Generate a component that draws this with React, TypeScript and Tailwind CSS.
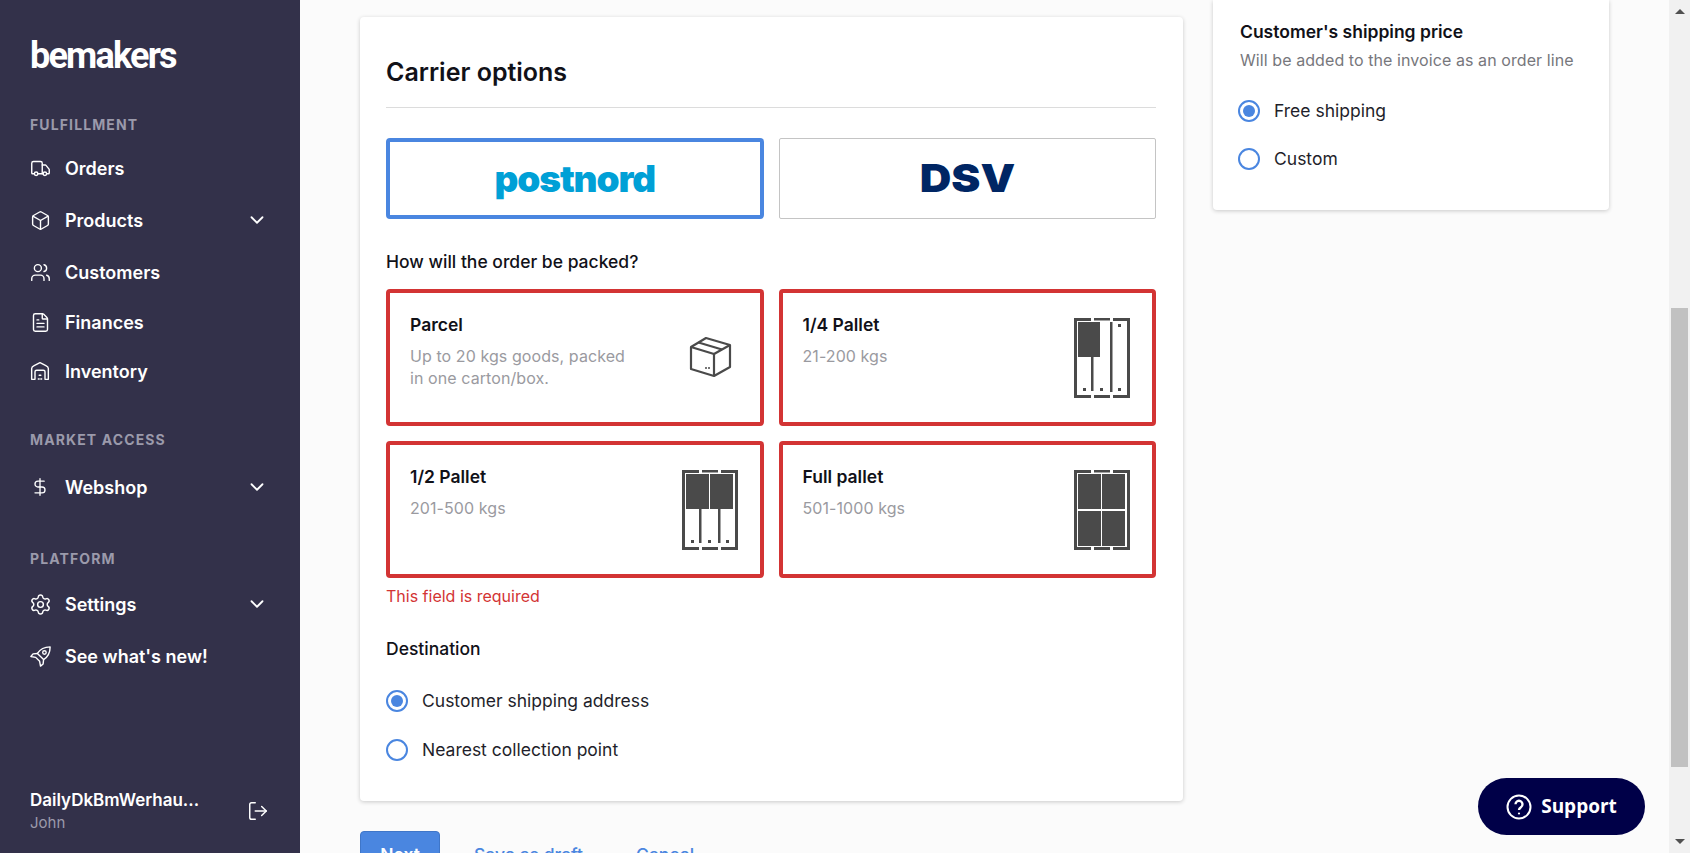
import { ChevronDown, Box, Users, FileText, DollarSign, Settings, LogOut, Truck } from "lucide-react";

const font = { fontFamily: "Inter, sans-serif" };

function SectionLabel({ children, className }: { children: string; className: string }) {
  return <div className={`text-[14px] leading-4 font-bold tracking-[0.08em] text-[#9b9aab] ${className}`}>{children}</div>;
}

function NavItem({ icon, label, chevron, className }: { icon: React.ReactNode; label: string; chevron?: boolean; className: string }) {
  return (
    <div className={`flex items-center h-6 ${className}`}>
      <div className="w-[35px] shrink-0 text-white">{icon}</div>
      <span className="text-[18px] font-semibold text-white">{label}</span>
      {chevron && <ChevronDown className="ml-auto text-white" size={22} strokeWidth={2} />}
    </div>
  );
}

function Radio({ checked, label }: { checked?: boolean; label: string }) {
  return (
    <div className="flex items-center gap-[14px]">
      <div className="w-[22px] h-[22px] rounded-full border-2 border-[#4a86e0] flex items-center justify-center shrink-0">
        {checked && <div className="w-3 h-3 rounded-full bg-[#4a86e0]" />}
      </div>
      <span className="text-[17.5px] leading-6 text-[#1f1f2b]">{label}</span>
    </div>
  );
}

function WarehouseIcon() {
  return (
    <svg width="20" height="20" viewBox="0 0 24 24" fill="none" stroke="currentColor" strokeWidth="1.7" strokeLinecap="round" strokeLinejoin="round">
      <path d="M2 22 V9 C2 7 3 6.5 5 5.5 L12 2 L19 5.5 C21 6.5 22 7 22 9 V22 H18 V13 C18 11.5 17 11 16 11 H8 C7 11 6 11.5 6 13 V22 Z" />
      <path d="M10 21.5 h1 M13 21.5 h1 M11 17 h2" />
    </svg>
  );
}

function RocketIcon() {
  return (
    <svg width="21" height="21" viewBox="0 0 24 24" fill="none" stroke="currentColor" strokeWidth="1.6" strokeLinejoin="round">
      <path d="M23 1 C17 1 12 3 8.5 8.5 L15.5 15.5 C21 12 23 7 23 1 Z" />
      <path d="M8.5 8.5 L3.5 9 L1 12 L6.5 13 L11 17.5 L12 23 L15 20.5 L15.5 15.5" />
      <circle cx="16.5" cy="7.5" r="2" />
    </svg>
  );
}

function BoxIcon() {
  return (
    <svg width="44" height="42" viewBox="0 0 44 42" fill="none" stroke="#4a4a4a" strokeWidth="2.2" strokeLinejoin="round">
      <path d="M2 11 L17 2 L41 9 L41 31 L25 40 L2 33 Z" />
      <path d="M2 11 L25 18 L41 9" />
      <path d="M25 18 L25 40" />
      <path d="M9.5 6.5 L33 13.5" />
      <path d="M16 32 h2 M19 32 h2" strokeWidth="1.5" />
    </svg>
  );
}

// pallet drawing, `filled` lists the dark blocks as x,y,w,h
function PalletIcon({ filled, dividers }: { filled: number[][]; dividers: number[][] }) {
  return (
    <svg width="56" height="80" viewBox="0 0 56 80" fill="none">
      <path d="M2 0 H0 V80 H17 V77 H3 V3 H17 V0 Z" fill="#4a4a4a" />
      <path d="M20 0 H36 V2.5 H20 Z M20 77 H36 V80 H20 Z" fill="#4a4a4a" />
      <path d="M39 0 H56 V80 H39 V77 H53 V3 H39 Z" fill="#4a4a4a" />
      {dividers.map(([x, y, h], i) => (
        <rect key={i} x={x} y={y} width="2.5" height={h} fill="#4a4a4a" />
      ))}
      {filled.map(([x, y, w, h], i) => (
        <rect key={i} x={x} y={y} width={w} height={h} fill="#4a4a4a" />
      ))}
    </svg>
  );
}

function Dots({ items }: { items: number[][] }) {
  return (
    <svg width="56" height="80" viewBox="0 0 56 80" className="absolute inset-0">
      {items.map(([x, y], i) => (
        <rect key={i} x={x} y={y} width="3" height="3" fill="#4a4a4a" />
      ))}
    </svg>
  );
}

function PackCard({ title, desc, icon }: { title: string; desc: string[]; icon: React.ReactNode }) {
  return (
    <div className="h-[137px] border-4 border-[#d33434] rounded-[4px] bg-white pl-[20px] pr-[22px] pt-[20px] flex justify-between">
      <div>
        <div className="text-[17.5px] leading-6 font-semibold text-[#111118]">{title}</div>
        <div className="mt-[8px] text-[16px] leading-[22px] text-[#9a9aa0] tracking-[0.005em]">
          {desc.map((d) => (
            <div key={d}>{d}</div>
          ))}
        </div>
      </div>
      <div className="relative w-[56px] h-[80px] mt-[5px]">{icon}</div>
    </div>
  );
}

export default function App() {
  return (
    <div className="relative flex h-[853px] w-full overflow-hidden bg-[#fbfbfb]" style={font}>
      {/* sidebar */}
      <aside className="w-[300px] shrink-0 bg-[#33314a] flex flex-col pl-[30px] pr-[32px]">
        <div className="mt-[33px] h-[46px] text-[36px] leading-[46px] font-bold text-white tracking-[-0.05em]" style={{ fontFamily: "Roboto, sans-serif" }}>
          bemakers
        </div>
        <SectionLabel className="mt-[38px]">FULFILLMENT</SectionLabel>
        <NavItem className="mt-[23px]" icon={<Truck size={21} strokeWidth={1.6} />} label="Orders" />
        <NavItem className="mt-[28px]" icon={<Box size={21} strokeWidth={1.6} />} label="Products" chevron />
        <NavItem className="mt-[28px]" icon={<Users size={21} strokeWidth={1.6} />} label="Customers" />
        <NavItem className="mt-[26px]" icon={<FileText size={21} strokeWidth={1.6} />} label="Finances" />
        <NavItem className="mt-[25px]" icon={<WarehouseIcon />} label="Inventory" />
        <SectionLabel className="mt-[49px]">MARKET ACCESS</SectionLabel>
        <NavItem className="mt-[27px]" icon={<DollarSign size={20} strokeWidth={1.6} />} label="Webshop" chevron />
        <SectionLabel className="mt-[52px]">PLATFORM</SectionLabel>
        <NavItem className="mt-[25px]" icon={<Settings size={23} strokeWidth={1.5} className="-ml-px" />} label="Settings" chevron />
        <NavItem className="mt-[28px]" icon={<RocketIcon />} label="See what's new!" />
        <div className="mt-auto mb-[19px] flex items-center justify-between">
          <div>
            <div className="text-[17px] leading-6 font-semibold text-white">DailyDkBmWerhau...</div>
            <div className="text-[15px] leading-[22px] text-[#9b9aab]">John</div>
          </div>
          <LogOut className="text-white -mr-px" size={22} strokeWidth={1.6} />
        </div>
      </aside>

      {/* scrolled content */}
      <main className="flex-1 pl-[60px] pt-[17px] flex items-start gap-[30px] min-w-0">
        <div className="w-[823px] shrink-0">
          <section className="h-[784px] bg-white rounded-[4px] shadow-[0_1px_4px_rgba(0,0,0,0.2)] pl-[26px] pr-[27px]">
            <h2 className="pt-[39px] text-[25px] leading-8 font-semibold text-[#111118]">Carrier options</h2>
            <div className="mt-[19px] border-t border-[#dcdcdc]" />
            <div className="mt-[30px] grid grid-cols-2 gap-[15px]">
              <div className="h-[81px] border-4 border-[#4a86e0] rounded-[4px] flex items-center justify-center">
                <span className="text-[37px] font-black text-[#00a0d6] tracking-[-0.03em]">postnord</span>
              </div>
              <div className="h-[81px] border border-[#c4c4c4] rounded-[2px] flex items-center justify-center">
                <span className="text-[38px] font-black text-[#002664] scale-x-[1.15]">DSV</span>
              </div>
            </div>
            <div className="mt-[31px] text-[17.5px] leading-6 font-medium text-[#111118]">How will the order be packed?</div>
            <div className="mt-[15px] grid grid-cols-2 gap-[15px]">
              <PackCard title="Parcel" desc={["Up to 20 kgs goods, packed", "in one carton/box."]} icon={<div className="pt-[18px] pl-[7px]"><BoxIcon /></div>} />
              <PackCard
                title="1/4 Pallet"
                desc={["21-200 kgs"]}
                icon={
                  <>
                    <PalletIcon filled={[[4, 4, 22, 35]]} dividers={[[17, 39, 34], [36, 4, 70]]} />
                    <Dots items={[[9, 70], [26, 70], [44, 70], [44, 6]]} />
                  </>
                }
              />
              <PackCard
                title="1/2 Pallet"
                desc={["201-500 kgs"]}
                icon={
                  <>
                    <PalletIcon filled={[[4, 4, 23, 35], [28, 4, 23, 35]]} dividers={[[17, 39, 34], [36, 39, 34]]} />
                    <Dots items={[[9, 70], [26, 70], [44, 70]]} />
                  </>
                }
              />
              <PackCard
                title="Full pallet"
                desc={["501-1000 kgs"]}
                icon={<PalletIcon filled={[[4, 4, 23, 35], [28, 4, 23, 35], [4, 41, 23, 35], [28, 41, 23, 35]]} dividers={[]} />}
              />
            </div>
            <div className="mt-[7px] text-[16px] leading-[22px] text-[#d33434]">This field is required</div>
            <div className="mt-[30px] text-[17.5px] leading-6 font-medium text-[#111118]">Destination</div>
            <div className="mt-[28px] flex flex-col gap-[25px]">
              <Radio checked label="Customer shipping address" />
              <Radio label="Nearest collection point" />
            </div>
          </section>
          <div className="mt-[30px] flex items-start">
            <button className="w-[80px] h-[48px] bg-[#4a86e0] border border-[#3f76c8] rounded-[4px] text-white font-semibold text-[17.5px]">Next</button>
            <span className="ml-[34px] pt-[12px] text-[17.5px] leading-6 font-medium text-[#4a86e0]">Save as draft</span>
            <span className="ml-[53px] pt-[12px] text-[17.5px] leading-6 font-medium text-[#4a86e0]">Cancel</span>
          </div>
        </div>

        <section className="w-[396px] h-[210px] -mt-[17px] shrink-0 bg-white rounded-b-[4px] shadow-[0_1px_4px_rgba(0,0,0,0.2)] pl-[27px] pt-[20px]">
          <div className="text-[17.5px] leading-6 font-semibold text-[#111118]">Customer's shipping price</div>
          <div className="mt-[5px] text-[16px] leading-[22px] text-[#77777c] tracking-[0.005em]">Will be added to the invoice as an order line</div>
          <div className="mt-[28px] -ml-[2px] flex flex-col gap-[24px]">
            <Radio checked label="Free shipping" />
            <Radio label="Custom" />
          </div>
        </section>
      </main>

      {/* scrollbar */}
      <div className="w-[21px] shrink-0 bg-[#f1f1f1] flex flex-col items-center">
        <div className="mt-[9px] w-0 h-0 border-x-[5px] border-x-transparent border-b-[5px] border-b-[#505050]" />
        <div className="mt-[294px] h-[459px] w-[17px] bg-[#c1c1c1]" />
        <div className="mt-[72px] w-0 h-0 border-x-[5px] border-x-transparent border-t-[5px] border-t-[#505050]" />
      </div>

      <div className="absolute left-[1478px] top-[778px] w-[167px] h-[57px] rounded-full bg-[#000048] flex items-center justify-center gap-[9px] text-white">
        <svg width="26" height="26" viewBox="0 0 26 26" fill="none" stroke="white" strokeWidth="2">
          <circle cx="13" cy="13" r="11.5" />
          <path d="M9.5 10.2a3.5 3.5 0 1 1 5.4 3c-1.2.8-1.9 1.4-1.9 2.8" strokeWidth="2.4" />
          <circle cx="13" cy="19.5" r="1.1" fill="white" stroke="none" />
        </svg>
        <span className="text-[19px] font-bold" style={{ fontFamily: "'Open Sans', sans-serif" }}>Support</span>
      </div>
    </div>
  );
}
